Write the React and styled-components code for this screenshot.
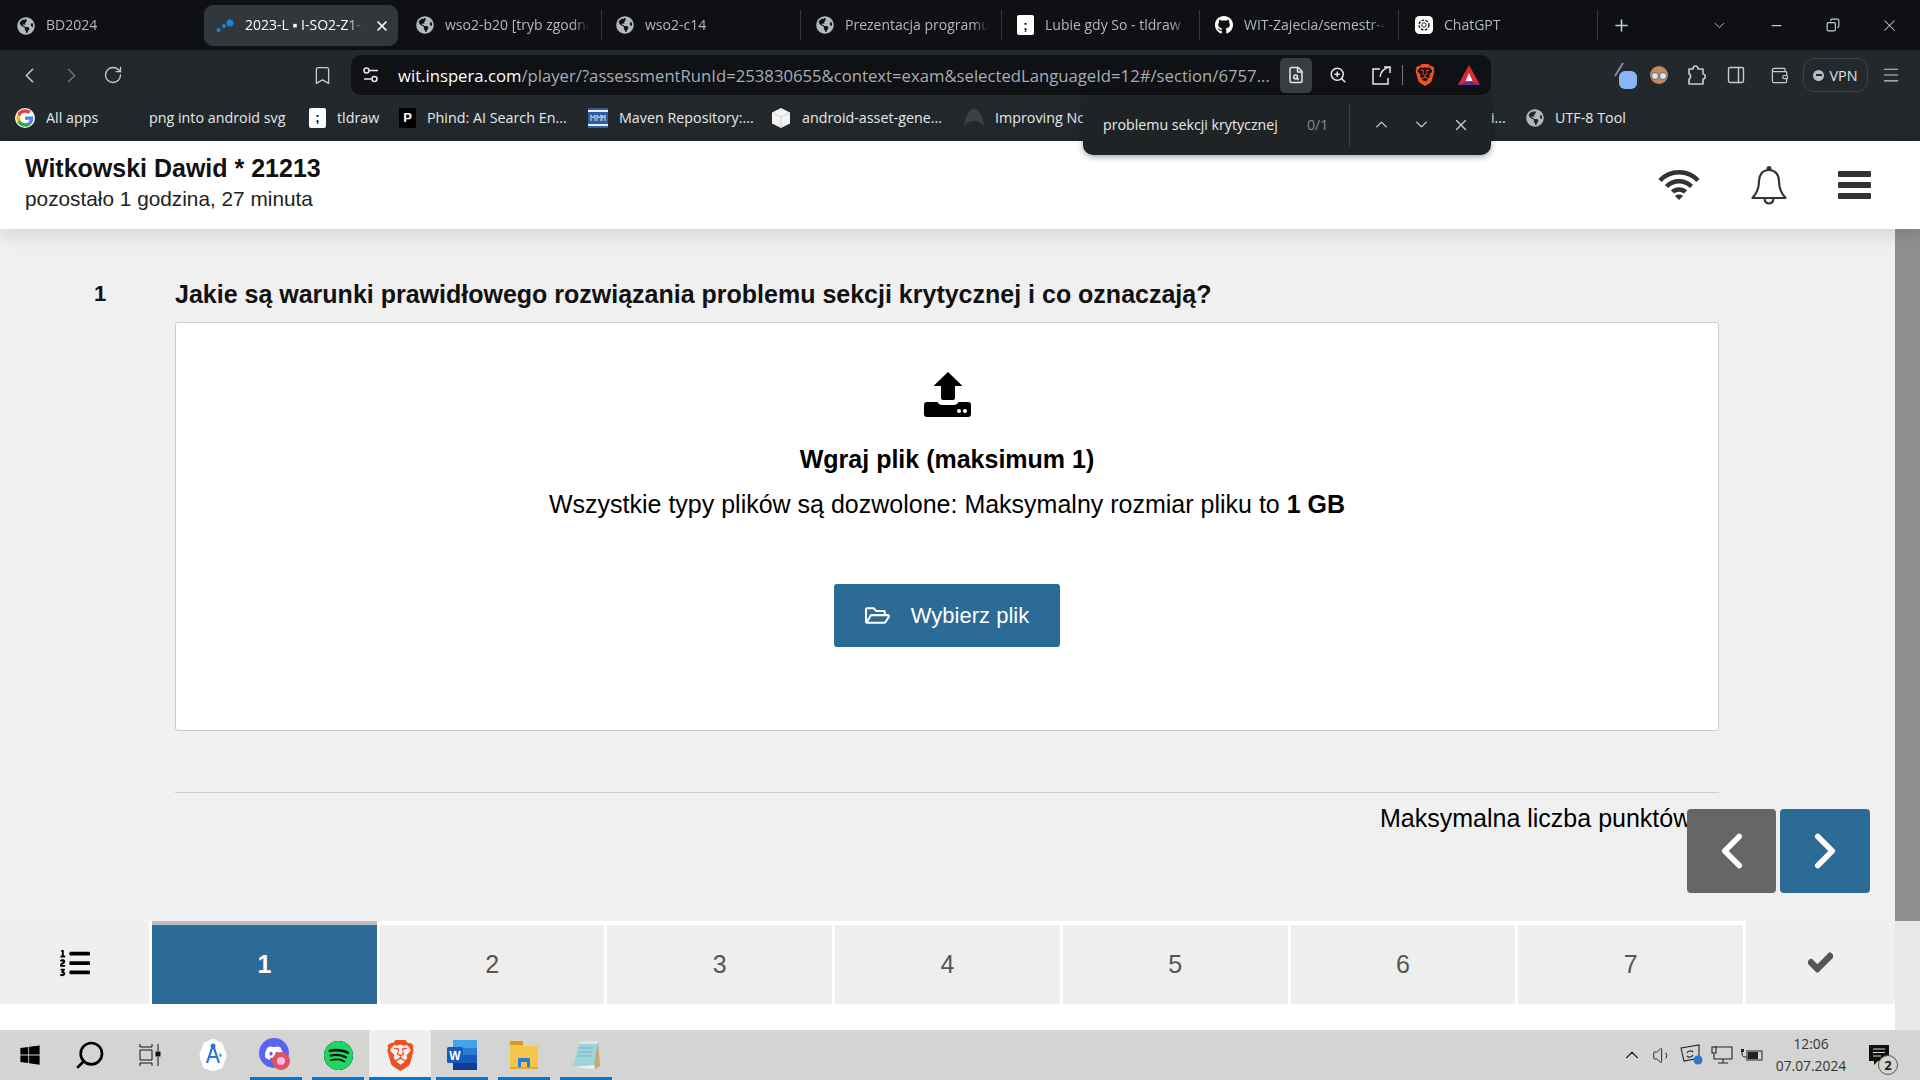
import React from "react";
import styled, { createGlobalStyle } from "styled-components";
import { FaGithub, FaCheck, FaListOl, FaWindows, FaRegFolderOpen, FaGlobeAmericas } from "react-icons/fa";
import { SiSpotify, SiBrave, SiDiscord } from "react-icons/si";
import { ChevronLeft, ChevronRight, ChevronUp, ChevronDown, RotateCw, Bookmark as BookmarkIcon, ZoomIn, X, Plus, Minus, Copy, PanelRight, Wallet, Menu, Search, FileSearch, Volume1 } from "lucide-react";

const Global = createGlobalStyle`
  html, body { margin: 0; padding: 0; background: #fff; }
  * { box-sizing: border-box; }
`;
const Page = styled.div`
  width: 1920px; height: 1080px; overflow: hidden; position: relative;
  display: flex; flex-direction: column; font-family: "Liberation Sans", Arial, sans-serif;
`;
const Chrome = styled.div`font-family: "Open Sans", "Noto Sans", sans-serif; position: relative; height: 141px; flex: none; background: #22282c;`;
const TabStrip = styled.div`height: 50px; background: #0e1014; display: flex; align-items: flex-start; padding-top: 5px; padding-left: 5px;`;
const Tab = styled.div`
  width: ${p => p.$w || 199}px; display: flex; align-items: center; padding-left: ${p => p.$pl || 12}px; gap: 11px;
  color: ${p => p.$active ? "#fff" : "#b4b8bb"}; font-size: 14px; border-radius: 9px; white-space: nowrap;
  background: ${p => p.$active ? "#30383d" : "transparent"};
  border-right: ${p => p.$sep ? "1px solid #35393d" : "none"};
  margin-right: ${p => p.$mr || 0}px;
  border-top-right-radius: ${p => p.$sep ? 0 : 9}px; border-bottom-right-radius: ${p => p.$sep ? 0 : 9}px;
  height: ${p => p.$sep ? 30 : 41}px; margin-top: ${p => p.$sep ? 5 : 0}px;
`;
const TabTitle = styled.span`
  flex: 1; overflow: hidden; white-space: nowrap; padding-bottom: 2px; margin-right: ${p => p.$mr || 0}px;
  -webkit-mask-image: linear-gradient(to right, #000 calc(100% - 16px), transparent);
`;
const Favicon = styled.span`width: 18px; height: 18px; flex: none; display: flex; align-items: center; justify-content: center; color: ${p => p.$c || "#b4b8bb"};`;
const WhiteIcon = styled.span`
  width: 17px; height: 20px; flex: none; display: flex; align-items: center; justify-content: center;
  background: ${p => p.$bg || "#fff"}; color: ${p => p.$c || "#000"}; border-radius: 2px; font-weight: 700; font-size: 13px; font-family: "Liberation Sans", sans-serif;
`;
const WindowControls = styled.div`display: flex; align-items: center; height: 40px; color: #dfe1e3;`;
const Slot = styled.div`
  width: ${p => p.$w}px; height: ${p => p.$h || 36}px; flex: none; display: flex; align-items: center; justify-content: center;
  color: ${p => p.$c || "#c8ccd0"}; margin-left: ${p => p.$ml || 0}px; position: relative;
  background: ${p => p.$bg || "transparent"}; border-radius: 5px;
`;
const Toolbar = styled.div`height: 45px; display: flex; align-items: center; padding: 5px 0 0 8px;`;
const UrlBar = styled.div`
  width: 1140px; height: 40px; margin-left: 8px; background: #0f1115; border-radius: 10px; flex: none;
  display: flex; align-items: center; padding-left: 5px;
`;
const UrlText = styled.div`flex: 1; overflow: hidden; white-space: nowrap; font-size: 16.7px; color: #a8adb2; margin-left: 12px;`;
const UrlHost = styled.span`color: #fff;`;
const Sep = styled.div`width: 1px; height: 20px; background: #777; flex: none;`;
const Vpn = styled.div`
  width: 65px; height: 34px; border: 1px solid #3d4448; border-radius: 11px; display: flex; align-items: center; justify-content: center; gap: 5px;
  color: #dfe1e3; font-size: 14.4px; margin-left: 3px; flex: none;
`;
const VpnDot = styled.span`width: 11px; height: 11px; border-radius: 50%; background: #b8bcc0; display: flex; align-items: center; justify-content: center;`;
const VpnDash = styled.span`width: 6px; height: 2px; background: #22282c;`;
const Bookmarks = styled.div`height: 46px; display: flex; align-items: center; padding: 0 0 1px 15px;`;
const Mark = styled.div`
  width: ${p => p.$w}px; flex: none; display: flex; align-items: center; gap: 11px; color: #e6e8ea; font-size: 14.3px; white-space: nowrap; overflow: hidden;
`;
const MarkText = styled.span`overflow: hidden; white-space: nowrap; flex: 1;`;
const FindBar = styled.div`
  position: absolute; left: 1083px; top: 96px; width: 408px; height: 59px; background: #202326; border-radius: 0 0 10px 10px;
  box-shadow: 0 2px 6px rgba(0,0,0,.35); display: flex; align-items: center; padding: 0 0 2px 20px; color: #e8eaec; font-size: 14.2px; z-index: 5;
`;
const FindQuery = styled.div`width: 204px; flex: none;`;
const FindCount = styled.div`width: 34px; color: #7d8e9e; flex: none;`;
const FindDivider = styled.div`width: 1px; height: 42px; background: #3f4347; margin: 0 11px 0 8px; flex: none;`;
const Header = styled.header`
  height: 88px; flex: none; background: #fff; display: flex; align-items: center; justify-content: space-between; padding: 0 49px 0 25px;
  position: relative; z-index: 2; box-shadow: 0 2px 22px rgba(0,0,0,.16);
`;
const Identity = styled.div`display: flex; flex-direction: column; gap: 4px; padding-bottom: 5px;`;
const Name = styled.div`font-size: 25px; font-weight: 700; color: #111; line-height: 29px;`;
const Remaining = styled.div`font-size: 20.8px; color: #222; line-height: 24px;`;
const HeaderIcons = styled.div`display: flex; align-items: center; gap: 51px;`;
const Main = styled.div`height: 692px; flex: none; display: flex; background: #f0f0f0; position: relative;`;
const Content = styled.main`flex: 1; padding-top: 47px; display: flex; flex-direction: column; position: relative; overflow: hidden;`;
const Question = styled.div`display: flex; align-items: center; height: 36px;`;
const QNum = styled.div`width: 175px; padding-left: 94px; font-size: 22px; font-weight: 700; color: #111;`;
const QText = styled.h1`margin: 0; font-size: 25px; font-weight: 700; color: #111; line-height: 36px; white-space: nowrap;`;
const UploadBox = styled.section`
  margin: 10px 0 0 175px; width: 1544px; height: 409px; background: #fff; border: 1px solid #ccc; border-radius: 3px;
  display: flex; flex-direction: column; align-items: center; padding-top: 49px;
`;
const UploadTitle = styled.div`font-size: 25px; font-weight: 700; color: #000; margin-top: 27px; line-height: 30px;`;
const UploadHint = styled.div`font-size: 25px; color: #000; margin-top: 16px; line-height: 29px;`;
const Strong = styled.b`font-weight: 700;`;
const PickButton = styled.button`
  width: 226px; height: 63px; margin-top: 65px; border: 0; background: #2c6b96; color: #fff; border-radius: 3px; font: 22px "Liberation Sans", sans-serif;
  display: flex; align-items: center; justify-content: center; gap: 21px;
`;
const Rule = styled.div`height: 1px; background: #ccc; margin: 61px 0 0 175px; width: 1544px;`;
const Points = styled.div`font-size: 25px; color: #000; margin-left: 1380px; white-space: nowrap; line-height: 29px; margin-top: 11px;`;
const Pager = styled.div`position: absolute; left: 1687px; top: 580px; display: flex; gap: 4px; z-index: 3;`;
const PagerButton = styled.button`
  width: ${p => p.$w}px; height: 84px; border: 0; border-radius: 4px; background: ${p => p.$bg}; color: #fff; display: flex; align-items: center; justify-content: center; padding: 0;
`;
const Scrollbar = styled.div`width: 25px; flex: none; background: #8f8f8f;`;
const NavRow = styled.div`display: flex; background: #e8e8e8;`;
const NavEdge = styled.div`width: 25px; background: #e8e8e8;`;
const NavStrip = styled.nav`height: 83px; flex: none; background: #fff; display: flex; width: 1895px; gap: 3px; font-size: 25px;`;
const NavIcon = styled.div`width: 149px; flex: none; background: #efefef; display: flex; align-items: center; justify-content: center; color: #000;`;
const NavCell = styled.div`
  flex: 1; margin-top: ${p => p.$active ? 0 : 4}px; border-top: ${p => p.$active ? "4px solid #bdbdbd" : "0"};
  background: ${p => p.$active ? "#2c6b96" : "#eee"}; color: ${p => p.$active ? "#fff" : "#555"};
  font-weight: ${p => p.$active ? 700 : 400}; display: flex; align-items: center; justify-content: center;
`;
const NavCheck = styled.div`width: 149px; flex: none; background: #efefef; display: flex; align-items: center; justify-content: center; color: #555;`;
const BelowRow = styled.div`height: 26px; flex: none; display: flex; background: #fff;`;
const BelowFill = styled.div`flex: 1;`;
const BelowEdge = styled.div`width: 25px; background: #e8e8e8;`;
const Taskbar = styled.footer`
  height: 50px; flex: none; background: #d4d4d2; display: flex; align-items: center; position: relative;
  font-family: "Open Sans", sans-serif; color: #222;
`;
const TaskSlot = styled.div`
  width: ${p => p.$w || 62}px; height: 50px; flex: none; display: flex; align-items: center; justify-content: center; position: relative;
  background: ${p => p.$active ? "#efefef" : "transparent"};
  &::after {
    content: ""; position: absolute; left: ${p => p.$active ? 0 : 5}px; right: ${p => p.$active ? 0 : 5}px; bottom: 0; height: 3px;
    background: ${p => p.$on ? "#0078d4" : "transparent"};
  }
`;
const Tray = styled.div`margin-left: auto; display: flex; align-items: center; height: 50px; padding-right: 12px;`;
const TrayIcon = styled.div`width: 30px; display: flex; align-items: center; justify-content: center; color: #222;`;
const Clock = styled.div`width: 82px; margin-left: 3px; text-align: center; font-size: 13.8px; line-height: 22px; color: #333; white-space: nowrap;`;
const Notify = styled.div`width: 56px; height: 50px; display: flex; align-items: center; justify-content: center; position: relative;`;
const Badge = styled.span`
  position: absolute; left: 26px; top: 25px; width: 20px; height: 20px; border-radius: 50%; background: #d4d4d2; border: 1px solid #555;
  font-size: 13px; font-weight: 700; display: flex; align-items: center; justify-content: center; color: #222;
`;

const Globe = () => <FaGlobeAmericas size={18} />;
const GoogleIcon = () => (
  <svg width="20" height="20" viewBox="0 0 48 48"><circle cx="24" cy="24" r="24" fill="#fff"/><path fill="#4285F4" d="M44 24.500c0-1.400-.1-2.700-.4-4H24v7.600h11.300c-.5 2.600-2 4.800-4.200 6.300l6.600 5.100c3.900-3.600 6.300-8.900 6.300-15z"/><path fill="#34A853" d="M24 45c5.700 0 10.400-1.900 13.800-5.100l-6.600-5.100c-1.800 1.200-4.200 2-7.100 2-5.500 0-10.100-3.700-11.800-8.700l-6.800 5.300C8.900 40.700 15.900 45 24 45z"/><path fill="#FBBC05" d="M12.200 28.100c-.9-2.600-.9-5.500 0-8.100l-6.800-5.300c-2.900 5.800-2.900 12.900 0 18.700z"/><path fill="#EA4335" d="M24 11.200c3 0 5.800 1.100 7.900 3.100l5.900-5.900C34.300 5 29.600 3 24 3 15.900 3 8.900 7.300 5.400 14.700l6.800 5.300C13.900 14.900 18.500 11.200 24 11.200z"/></svg>
);
const MavenIcon = () => (
  <svg width="20" height="20" viewBox="0 0 20 20"><rect width="20" height="20" fill="#2a5fa8"/><rect y="2" width="20" height="2" fill="#eef"/><rect y="16" width="20" height="2" fill="#eef"/><path d="M3 13V7l2 3 2-3v6M9 13V7l2 3 2-3v6M14 13V7l1.500 3L17 7v6" stroke="#cde" strokeWidth="1" fill="none"/></svg>
);
const BoxIcon = () => (
  <svg width="20" height="22" viewBox="0 0 20 22"><path d="M10 1l9 4.500v11L10 21l-9-4.500v-11z" fill="#f3f3f3"/><path d="M1 5.500L10 10l9-4.500M10 10v11" stroke="#cfcfcf" fill="none"/></svg>
);
const ArchIcon = () => (
  <svg width="20" height="20" viewBox="0 0 20 20"><path d="M0 19C1 8 5 1 10 1s9 7 10 18c-2-3-5-6-10-6S2 16 0 19z" fill="#3c4145"/></svg>
);
const Dots = () => (
  <svg width="18" height="14" viewBox="0 0 18 14"><circle cx="2.500" cy="11" r="2" fill="#1d83d4"/><circle cx="8" cy="7" r="2" fill="#1d83d4"/><circle cx="14" cy="4" r="3.500" fill="#1d83d4"/></svg>
);
const ChatGpt = () => (
  <svg width="20" height="20" viewBox="0 0 20 20"><rect width="20" height="20" rx="5" fill="#fff"/><circle cx="10" cy="10" r="5.500" fill="none" stroke="#111" strokeWidth="1.500" strokeDasharray="3 1.500"/><circle cx="10" cy="10" r="2.500" fill="none" stroke="#111"/></svg>
);
const TuneIcon = () => (
  <svg width="18" height="18" viewBox="0 0 18 18" fill="none" stroke="#e6e8ea" strokeWidth="1.500"><circle cx="4.500" cy="4.500" r="2.500"/><path d="M7 4.500h9M2 13h7.500"/><circle cx="12.500" cy="13" r="2.500"/></svg>
);
const ShareIcon = () => (
  <svg width="21" height="21" viewBox="0 0 21 21" fill="none" stroke="#e6e8ea" strokeWidth="1.500"><path d="M13 2h6v6M19 2c-6 1-9 4-10 10"/><path d="M9 4H2v15h15v-6"/></svg>
);
const PuzzleIcon = () => (
  <svg width="20" height="22" viewBox="0 0 20 22" fill="none" stroke="#c8ccd0" strokeWidth="1.600" strokeLinejoin="round"><path d="M3 5h4c0-4 5-4 5 0h5v5c3 0 3 5 0 5v5H3v-5c2 0 2-5 0-5z"/></svg>
);
const BraveSmall = ({ size = 22 }) => <SiBrave size={size} color="#f1501f" />;
const Triangle = () => (
  <svg width="22" height="20" viewBox="0 0 22 20"><path d="M11 0l11 20H0z" fill="#e3272f"/><path d="M0 20l7-3h8l7 3z" fill="#6a2b94"/><path d="M11 8l3.500 8h-7z" fill="#fff"/></svg>
);
const PenBlob = () => (
  <svg width="26" height="30" viewBox="0 0 26 30"><path d="M3 16L11 3" stroke="#889" strokeWidth="2"/><rect x="7" y="11" width="18" height="18" rx="6" fill="#8ab4f8"/></svg>
);
const Avatar = () => (
  <svg width="20" height="20" viewBox="0 0 20 20"><circle cx="10" cy="10" r="9" fill="#c48a5e"/><circle cx="6" cy="11" r="3.500" fill="#dfe8e8" stroke="#667"/><circle cx="14" cy="11" r="3.500" fill="#dfe8e8" stroke="#667"/></svg>
);
const Wifi = () => (
  <svg width="42" height="30" viewBox="0 0 42 30" fill="none" stroke="#333" strokeWidth="4.500">
    <path d="M2 10.500C12-.5 30-.5 40 10.500"/><path d="M8.500 16.500c7-7 18-7 25 0"/><path d="M14.500 22c3.500-3.500 9.500-3.500 13 0"/><path d="M21 30l-4-4c2-2 6-2 8 0z" fill="#333" stroke="none"/>
  </svg>
);
const Bell = () => (
  <svg width="36" height="39" viewBox="0 0 36 39" fill="none" stroke="#333" strokeWidth="2.200" strokeLinejoin="round">
    <path d="M18 4c-6.500 0-10 5-10 11 0 8-2.500 12-6.500 17h33C30.500 27 28 23 28 15c0-6-3.500-11-10-11z"/>
    <circle cx="18" cy="2.500" r="1.400" fill="#333"/><path d="M13.500 33c.5 3 2.200 4.500 4.500 4.500s4-1.500 4.500-4.500"/>
  </svg>
);
const Burger = () => (
  <svg width="33" height="28" viewBox="0 0 33 28" fill="#333"><rect width="33" height="6" rx="1"/><rect y="11" width="33" height="6" rx="1"/><rect y="22" width="33" height="6" rx="1"/></svg>
);
const UploadIcon = () => (
  <svg width="47" height="45" viewBox="0 0 47 45"><path d="M24 0l14.500 14H31v12c0 1-1 2-2 2H19c-1 0-2-1-2-2V14H9.500z" fill="#000"/><path d="M3 30h10.500c1 2 2.500 3 4.500 3h12c2 0 3.500-1 4.500-3H44c2 0 3 1 3 3v9c0 2-1 3-3 3H3c-2 0-3-1-3-3v-9c0-2 1-3 3-3z" fill="#000"/><circle cx="35" cy="39" r="2" fill="#fff"/><circle cx="41" cy="39" r="2" fill="#fff"/></svg>
);
const AndroidStudio = () => (
  <svg width="30" height="34" viewBox="0 0 30 34"><path d="M15 1c4 0 4 3 8 3 3 2 2 5 4 8 2 4 2 7 0 11-2 3-1 6-4 8-4 0-4 2-8 2s-4-2-8-2c-3-2-2-5-4-8-2-4-2-7 0-11 2-3 1-6 4-8 4 0 4-3 8-3z" fill="#fff"/><path d="M15 7l-6 18M15 7l6 18M11 19h8" stroke="#2f6ee5" strokeWidth="2.200" fill="none"/><circle cx="15" cy="8" r="2.500" fill="#2f6ee5"/><path d="M21 15l3 2-2 3z" fill="#3aa757"/></svg>
);
const Discord = () => (
  <svg width="34" height="38" viewBox="0 0 34 38"><circle cx="15" cy="17" r="15" fill="#5865f2"/><g transform="translate(6 8)"><SiDiscord size={18} color="#fff" /></g><circle cx="22" cy="25" r="9" fill="#e2545c"/><circle cx="22" cy="25" r="4" fill="#fbe"/></svg>
);
const Word = () => (
  <svg width="30" height="30" viewBox="0 0 30 30"><rect x="6" width="24" height="30" rx="2" fill="#2b7cd3"/><rect x="6" y="0" width="24" height="8" fill="#41a5ee"/><rect x="6" y="15" width="24" height="8" fill="#185abd"/><rect x="6" y="23" width="24" height="7" fill="#103f91"/><rect y="7" width="16" height="16" rx="1.500" fill="#185abd"/><text x="8" y="19.500" fontSize="12" fontWeight="700" fill="#fff" textAnchor="middle" fontFamily="Liberation Sans">W</text></svg>
);
const Explorer = () => (
  <svg width="28" height="28" viewBox="0 0 28 28"><path d="M0 2h12l2 3h14v22H0z" fill="#f5c84c"/><rect y="0" width="13" height="4" fill="#d89c1c"/><path d="M8 26V17h12v9h-3v-5h-6v5z" fill="#2b7cd3"/><rect y="26" width="28" height="2" fill="#e0a92a"/></svg>
);
const Notepad = () => (
  <svg width="28" height="30" viewBox="0 0 28 30"><path d="M8 1h18l-3 24-22 2z" fill="#9fd3dc"/><path d="M26 1l2 25-5 3-1-4z" fill="#c3a878"/><path d="M8 1h18l-.5 3H7z" fill="#dfe6e8"/><path d="M1 27l22-2-1 4z" fill="#eee"/><path d="M7 8h14M6 12h14M6 16h13" stroke="#6fb0bf" strokeWidth=".8"/></svg>
);
const Sync = () => (
  <svg width="24" height="22" viewBox="0 0 24 22" fill="none" stroke="#222" strokeWidth="1.100"><path d="M1 4l18-3v13l-15 3z"/><path d="M7 9c1-2 4-3 6-1m0 3c-1 2-4 3-6 1"/><circle cx="18" cy="16" r="4.500" fill="#2b76c8" stroke="none"/></svg>
);
const NetworkIcon = () => (
  <svg width="22" height="18" viewBox="0 0 22 18" fill="none" stroke="#222" strokeWidth="1.100"><path d="M4 1h17v12H3V8M12 13v4M7 17h10"/><rect x="1" y="1" width="4" height="6"/></svg>
);
const BatteryIcon = () => (
  <svg width="22" height="14" viewBox="0 0 22 14"><rect x="6" y="3" width="15" height="9" fill="none" stroke="#222"/><rect x="7" y="4" width="10" height="7" fill="#222"/><path d="M1 3v3c0 2 1.500 3 3 3h2" stroke="#222" fill="none"/><rect y="1" width="3" height="3" fill="#222"/></svg>
);
const NotifyIcon = () => (
  <svg width="22" height="21" viewBox="0 0 22 21"><path d="M0 0h20v16H9l-4 4v-4H0z" fill="#111"/><path d="M4 4h12M4 7.500h12M4 11h8" stroke="#d4d4d2"/></svg>
);

const cells = [1, 2, 3, 4, 5, 6, 7];

export default function App() {
  return (
    <Page>
      <Global />
      <Chrome>
        <TabStrip>
          <Tab $w={199}><Favicon><Globe /></Favicon><TabTitle>BD2024</TabTitle></Tab>
          <Tab $w={194} $mr={5} $active><Favicon><Dots /></Favicon><TabTitle>2023-L ▪ I-SO2-Z1-23</TabTitle><X size={16} strokeWidth={2.500} style={{ marginRight: 8, flex: "none" }} /></Tab>
          <Tab $w={199} $sep $pl={13}><Favicon><Globe /></Favicon><TabTitle $mr={12}>wso2-b20 [tryb zgodności]</TabTitle></Tab>
          <Tab $w={199} $sep $pl={14}><Favicon><Globe /></Favicon><TabTitle $mr={12}>wso2-c14</TabTitle></Tab>
          <Tab $w={201} $sep $pl={15}><Favicon><Globe /></Favicon><TabTitle $mr={12}>Prezentacja programu PowerPoint</TabTitle></Tab>
          <Tab $w={198} $sep $pl={15}><WhiteIcon>;</WhiteIcon><TabTitle $mr={12}>Lubie gdy So - tldraw</TabTitle></Tab>
          <Tab $w={199} $sep $pl={15}><Favicon $c="#fff"><FaGithub size={20} /></Favicon><TabTitle $mr={12}>WIT-Zajecia/semestr-4</TabTitle></Tab>
          <Tab $w={199} $sep $pl={16}><Favicon><ChatGpt /></Favicon><TabTitle $mr={12}>ChatGPT</TabTitle></Tab>
          <WindowControls>
            <Slot $w={47}><Plus size={19} /></Slot>
            <Slot $w={50} $ml={49}><ChevronDown size={17} strokeWidth={1.200} /></Slot>
            <Slot $w={56} $ml={4}><Minus size={15} /></Slot>
            <Slot $w={57}><Copy size={14} style={{ transform: "scaleX(-1)" }} /></Slot>
            <Slot $w={56}><X size={19} strokeWidth={1.300} /></Slot>
          </WindowControls>
        </TabStrip>
        <Toolbar>
          <Slot $w={42}><ChevronLeft size={25} strokeWidth={1.500} /></Slot>
          <Slot $w={42} $c="#6e7276"><ChevronRight size={25} strokeWidth={1.500} /></Slot>
          <Slot $w={42}><RotateCw size={20} strokeWidth={1.600} /></Slot>
          <Slot $w={42} $ml={167}><BookmarkIcon size={21} strokeWidth={1.500} /></Slot>
          <UrlBar>
            <Slot $w={30}><TuneIcon /></Slot>
            <UrlText><UrlHost>wit.inspera.com</UrlHost>/player/?assessmentRunId=253830655&amp;context=exam&amp;selectedLanguageId=12#/section/6757...</UrlText>
            <Slot $w={32} $h={35} $bg="#3a3d40" $ml={8} $c="#e6e8ea"><FileSearch size={18} /></Slot>
            <Slot $w={42} $ml={5} $c="#e6e8ea"><ZoomIn size={18} /></Slot>
            <Slot $w={42} $ml={1}><ShareIcon /></Slot>
            <Sep />
            <Slot $w={44}><BraveSmall /></Slot>
            <Slot $w={44}><Triangle /></Slot>
          </UrlBar>
          <Slot $w={34} $ml={117}><PenBlob /></Slot>
          <Slot $w={34}><Avatar /></Slot>
          <Slot $w={40}><PuzzleIcon /></Slot>
          <Slot $w={40}><PanelRight size={20} strokeWidth={1.700} /></Slot>
          <Slot $w={42} $ml={2}><Wallet size={19} strokeWidth={1.500} /></Slot>
          <Vpn><VpnDot><VpnDash /></VpnDot>VPN</Vpn>
          <Slot $w={46}><Menu size={20} strokeWidth={1.300} /></Slot>
        </Toolbar>
        <Bookmarks>
          <Mark $w={134}><GoogleIcon /><MarkText>All apps</MarkText></Mark>
          <Mark $w={160}><MarkText>png into android svg</MarkText></Mark>
          <Mark $w={90}><WhiteIcon>;</WhiteIcon><MarkText>tldraw</MarkText></Mark>
          <Mark $w={189}><WhiteIcon $bg="#000" $c="#fff">P</WhiteIcon><MarkText>Phind: AI Search En...</MarkText></Mark>
          <Mark $w={183}><MavenIcon /><MarkText>Maven Repository:...</MarkText></Mark>
          <Mark $w={193}><BoxIcon /><MarkText>android-asset-gene...</MarkText></Mark>
          <Mark $w={527}><ArchIcon /><MarkText>Improving Node.js</MarkText></Mark>
          <Mark $w={35}><MarkText>i...</MarkText></Mark>
          <Mark $w={120}><Favicon><Globe /></Favicon><MarkText>UTF-8 Tool</MarkText></Mark>
        </Bookmarks>
        <FindBar>
          <FindQuery>problemu sekcji krytycznej</FindQuery>
          <FindCount>0/1</FindCount>
          <FindDivider />
          <Slot $w={40}><ChevronUp size={19} strokeWidth={1.700} /></Slot>
          <Slot $w={40}><ChevronDown size={19} strokeWidth={1.700} /></Slot>
          <Slot $w={40}><X size={18} strokeWidth={1.800} /></Slot>
        </FindBar>
      </Chrome>
      <Header>
        <Identity>
          <Name>Witkowski Dawid * 21213</Name>
          <Remaining>pozostało 1 godzina, 27 minuta</Remaining>
        </Identity>
        <HeaderIcons><Wifi /><Bell /><Burger /></HeaderIcons>
      </Header>
      <Main>
        <Content>
          <Question>
            <QNum>1</QNum>
            <QText>Jakie są warunki prawidłowego rozwiązania problemu sekcji krytycznej i co oznaczają?</QText>
          </Question>
          <UploadBox>
            <UploadIcon />
            <UploadTitle>Wgraj plik (maksimum 1)</UploadTitle>
            <UploadHint>Wszystkie typy plików są dozwolone: Maksymalny rozmiar pliku to <Strong>1 GB</Strong></UploadHint>
            <PickButton><FaRegFolderOpen size={25} />Wybierz plik</PickButton>
          </UploadBox>
          <Rule />
          <Points>Maksymalna liczba punktów</Points>
        </Content>
        <Scrollbar />
        <Pager>
          <PagerButton $w={89} $bg="#666"><ChevronLeft size={58} strokeWidth={2.300} /></PagerButton>
          <PagerButton $w={90} $bg="#2c6b96"><ChevronRight size={58} strokeWidth={2.300} /></PagerButton>
        </Pager>
      </Main>
      <NavRow>
        <NavStrip>
          <NavIcon><FaListOl size={30} /></NavIcon>
          {cells.map(n => <NavCell key={n} $active={n === 1}>{n}</NavCell>)}
          <NavCheck><FaCheck size={25} stroke="currentColor" strokeWidth={30} /></NavCheck>
        </NavStrip>
        <NavEdge />
      </NavRow>
      <BelowRow><BelowFill /><BelowEdge /></BelowRow>
      <Taskbar>
        <TaskSlot $w={60}><FaWindows size={22} color="#000" /></TaskSlot>
        <TaskSlot $w={60}><Search size={32} strokeWidth={2} color="#000" style={{ transform: "scaleX(-1)" }} /></TaskSlot>
        <TaskSlot $w={60}>
          <svg width="22" height="24" viewBox="0 0 22 24" fill="none" stroke="#111"><path d="M1 1v3h12V1M1 7h12v10H1zM1 23v-3h12v3M19 1v7M19 14v9"/><rect x="17" y="9" width="4" height="4" fill="#111"/></svg>
        </TaskSlot>
        <TaskSlot $w={65}><AndroidStudio /></TaskSlot>
        <TaskSlot $on><Discord /></TaskSlot>
        <TaskSlot $on><SiSpotify size={29} color="#1ed760" style={{ background: "#111", borderRadius: "50%" }} /></TaskSlot>
        <TaskSlot $on $active><BraveSmall size={31} /></TaskSlot>
        <TaskSlot $on><Word /></TaskSlot>
        <TaskSlot $on><Explorer /></TaskSlot>
        <TaskSlot $on><Notepad /></TaskSlot>
        <Tray>
          <TrayIcon><ChevronUp size={22} strokeWidth={1.200} /></TrayIcon>
          <TrayIcon><Volume1 size={21} strokeWidth={1.100} /></TrayIcon>
          <TrayIcon><Sync /></TrayIcon>
          <TrayIcon><NetworkIcon /></TrayIcon>
          <TrayIcon><BatteryIcon /></TrayIcon>
          <Clock>12:06<br />07.07.2024</Clock>
          <Notify><NotifyIcon /><Badge>2</Badge></Notify>
        </Tray>
      </Taskbar>
    </Page>
  );
}
